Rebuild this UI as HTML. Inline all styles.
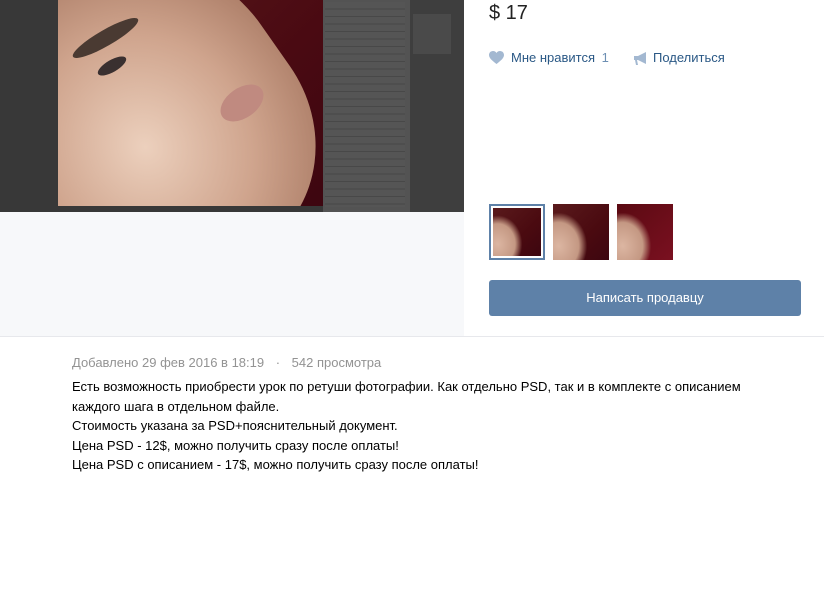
<!DOCTYPE html>
<html><head><meta charset="utf-8"><style>
*{margin:0;padding:0;box-sizing:border-box}
body{width:824px;height:605px;background:#fff;font-family:"Liberation Sans",Arial,sans-serif;position:relative;overflow:hidden}
.abs{position:absolute}
.face{background:
radial-gradient(ellipse 60% 70% at 10% 75%,#dcb6a2,#c49883 60%,rgba(160,110,95,0) 85%),
linear-gradient(135deg,#5a1a1c,#4a0a10 60%,#3d0610);}
</style></head><body>
<div class="abs" style="left:0;top:0;width:464px;height:212px;background:#383838"></div>
<div class="abs" style="left:58px;top:0;width:265px;height:206px;overflow:hidden;background:linear-gradient(135deg,#5a1a1c,#4a0a12 60%,#3d0610)">
 <div class="abs" style="left:-60px;top:-40px;width:300px;height:330px;border-radius:50% 45% 40% 50%;background:radial-gradient(ellipse at 45% 55%,#ecd0bd,#cfa48d 45%,#a97a64 80%);transform:rotate(-35deg)"></div>
 <div class="abs" style="left:10px;top:30px;width:75px;height:16px;border-radius:50%;background:#4a3a32;transform:rotate(-30deg)"></div>
 <div class="abs" style="left:38px;top:60px;width:32px;height:12px;border-radius:50%;background:#3a3030;transform:rotate(-30deg)"></div>
 <div class="abs" style="left:160px;top:88px;width:48px;height:30px;border-radius:50%;background:#c08a80;transform:rotate(-35deg)"></div>
</div>
<div class="abs" style="left:323px;top:0;width:87px;height:212px;background:#535353;padding-top:2px">
 <div style="margin-left:2px;width:80px;height:205px;background:repeating-linear-gradient(#555 0 6.5px,#484848 6.5px 7.5px)"></div>
</div>
<div class="abs" style="left:410px;top:0;width:54px;height:212px;background:#3e3e3e"></div>
<div class="abs" style="left:413px;top:14px;width:38px;height:40px;background:#4a4a4a"></div>
<div class="abs" style="left:0;top:212px;width:464px;height:124px;background:#f7f8fa"></div>
<div class="abs" style="left:0;top:336px;width:824px;height:1px;background:#e7e8ec"></div>

<div class="abs" style="left:489px;top:2px;font-size:20px;color:#222">$ 17</div>
<svg class="abs" style="left:489px;top:51px" width="15" height="13" viewBox="0 0 15 13"><path d="M7.5 13C3 9.5 0 7 0 4 0 1.8 1.7 0 4 0c1.5 0 2.8.8 3.5 2C8.2.8 9.5 0 11 0c2.3 0 4 1.8 4 4 0 3-3 5.5-7.5 9z" fill="#a3b8d1"/></svg>
<div class="abs" style="left:511px;top:50px;font-size:13px;color:#2a5885">Мне нравится <span style="color:#6d8fb3;margin-left:3px">1</span></div>
<svg class="abs" style="left:634px;top:52px" width="14" height="13" viewBox="0 0 14 13"><path d="M0 4h4l8-4v12L4 8H3l1 5H2L1 8H0z" fill="#a3b8d1"/></svg>
<div class="abs" style="left:653px;top:50px;font-size:13px;color:#2a5885">Поделиться</div>

<div class="abs" style="left:489px;top:204px;width:56px;height:56px;border:2px solid #5e81a8;padding:2px;background:#fff"><div class="face" style="width:48px;height:48px"></div></div>
<div class="abs face" style="left:553px;top:204px;width:56px;height:56px"></div>
<div class="abs face" style="left:617px;top:204px;width:56px;height:56px;background:radial-gradient(ellipse 60% 70% at 10% 75%,#dcb6a2,#c49883 60%,transparent 85%),linear-gradient(135deg,#5a0a12,#7a1020)"></div>

<div class="abs" style="left:489px;top:280px;width:312px;height:36px;background:#5e81a8;border-radius:3px;color:#fff;font-size:13px;text-align:center;line-height:36px">Написать продавцу</div>

<div class="abs" style="left:72px;top:355px;font-size:13px;color:#939393">Добавлено 29 фев 2016 в 18:19 <span style="margin:0 8px">·</span> 542 просмотра</div>
<div class="abs" style="left:72px;top:377px;width:720px;font-size:13px;line-height:19.5px;color:#000">Есть возможность приобрести урок по ретуши фотографии. Как отдельно PSD, так и в комплекте с описанием каждого шага в отдельном файле.<br>Стоимость указана за PSD+пояснительный документ.<br>Цена PSD - 12$, можно получить сразу после оплаты!<br>Цена PSD с описанием - 17$, можно получить сразу после оплаты!</div>
</body></html>
